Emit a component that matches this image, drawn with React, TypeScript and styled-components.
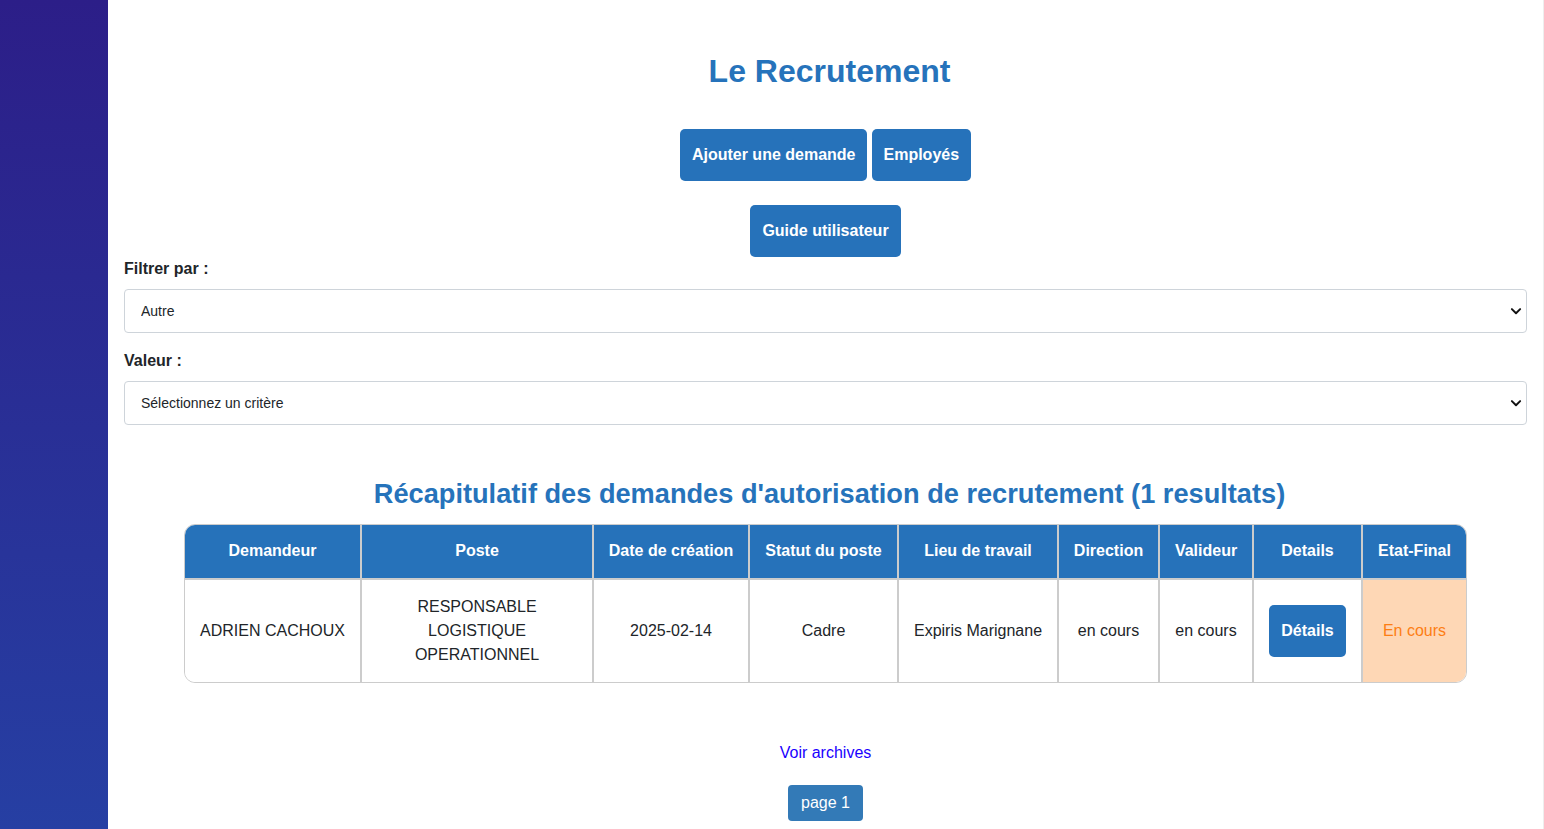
import React from "react";
import styled, { createGlobalStyle } from "styled-components";

const Global = createGlobalStyle`
  html, body { margin: 0; padding: 0; }
  body {
    font-family: "Liberation Sans", Arial, sans-serif;
    color: #212529;
    background: #fff;
  }
  * { box-sizing: border-box; }
`;

const Layout = styled.div`
  display: flex;
  min-height: 100vh;
`;

const Sidebar = styled.aside`
  width: 108px;
  flex: 0 0 108px;
  background: linear-gradient(180deg, #2c1e88 0%, #263fa3 100%);
`;

const Main = styled.main`
  flex: 1;
  padding: 16px 16px 8px;
  border-right: 1px solid #eeeeee;
  min-width: 0;
`;

const Title = styled.h1`
  margin: 37px 0 0;
  padding-left: 8px;
  text-align: center;
  font-size: 32px;
  line-height: 37px;
  font-weight: 700;
  color: #2673bb;
`;

const ButtonRow = styled.div<{ $top: number }>`
  display: flex;
  justify-content: center;
  gap: 5px;
  margin-top: ${(p) => p.$top}px;
`;

const PrimaryButton = styled.button<{ $px?: number }>`
  font-family: "Liberation Sans", Arial, sans-serif;
  font-size: 16px;
  font-weight: 700;
  line-height: 18px;
  color: #fff;
  background: #2672ba;
  border: none;
  border-radius: 5px;
  padding: 17px ${(p) => p.$px ?? 11.5}px;
  cursor: pointer;
`;

const FieldGroup = styled.div<{ $top: number }>`
  margin-top: ${(p) => p.$top}px;
`;

const Label = styled.label`
  display: block;
  font-size: 16px;
  font-weight: 700;
  line-height: 24px;
  color: #212529;
  margin-bottom: 8px;
`;

const SelectWrap = styled.div`
  position: relative;
`;

const Select = styled.select`
  appearance: none;
  -webkit-appearance: none;
  width: 100%;
  height: 44px;
  font-family: "Liberation Sans", Arial, sans-serif;
  font-size: 14px;
  color: #212529;
  background: #fff;
  border: 1px solid #ced4da;
  border-radius: 4px;
  padding: 0 16px;
`;

const Chevron = styled.svg`
  position: absolute;
  right: 5px;
  top: 50%;
  transform: translateY(-50%);
  pointer-events: none;
`;

const SectionTitle = styled.h2`
  margin: 52px 0 0;
  padding-left: 8px;
  text-align: center;
  font-size: 27.2px;
  line-height: 34px;
  font-weight: 700;
  color: #2673bb;
`;

const TableFrame = styled.div`
  width: 1283px;
  margin: 13px auto 0;
  border: 1px solid #cccccc;
  border-radius: 11px;
  overflow: hidden;
`;

const Table = styled.table`
  width: 100%;
  border-collapse: collapse;
  table-layout: fixed;
`;

const Th = styled.th<{ $w: number }>`
  width: ${(p) => p.$w}px;
  background: #2672ba;
  color: #fff;
  font-size: 16px;
  font-weight: 700;
  line-height: 24px;
  padding: 14px 4px 15px;
  text-align: center;
  border-right: 2px solid #cccccc;
  border-bottom: 2px solid #cccccc;
  &:last-child { border-right: none; }
`;

const Td = styled.td<{ $final?: boolean }>`
  font-size: 16px;
  line-height: 24px;
  padding: 15px 8px;
  text-align: center;
  vertical-align: middle;
  color: ${(p) => (p.$final ? "#fd7e14" : "#212529")};
  background: ${(p) => (p.$final ? "#fed7b5" : "#fff")};
  border-right: 2px solid #cccccc;
  &:last-child { border-right: none; }
`;

const Footer = styled.div`
  display: flex;
  flex-direction: column;
  align-items: center;
  margin-top: 61px;
`;

const ArchiveLink = styled.a`
  font-size: 16px;
  line-height: 18px;
  color: #1a00ff;
  text-decoration: none;
`;

const PageButton = styled.button`
  margin-top: 23px;
  font-family: "Liberation Sans", Arial, sans-serif;
  font-size: 16px;
  line-height: 24px;
  color: #fff;
  background: #337ab7;
  border: none;
  border-radius: 4px;
  padding: 6px 13px;
`;

const columns: { label: string; w: number }[] = [
  { label: "Demandeur", w: 176 },
  { label: "Poste", w: 232 },
  { label: "Date de création", w: 156 },
  { label: "Statut du poste", w: 149 },
  { label: "Lieu de travail", w: 160 },
  { label: "Direction", w: 101 },
  { label: "Valideur", w: 94 },
  { label: "Details", w: 109 },
  { label: "Etat-Final", w: 104 },
];

const ChevronIcon = () => (
  <Chevron width="12" height="12" viewBox="0 0 16 16">
    <path d="M2.5 5.5 8 11l5.5-5.5" fill="none" stroke="#111" strokeWidth="2.6" strokeLinecap="round" strokeLinejoin="round" />
  </Chevron>
);

export default function App() {
  return (
    <>
      <Global />
      <Layout>
        <Sidebar />
        <Main>
          <Title>Le Recrutement</Title>
          <ButtonRow $top={39}>
            <PrimaryButton>Ajouter une demande</PrimaryButton>
            <PrimaryButton>Employés</PrimaryButton>
          </ButtonRow>
          <ButtonRow $top={24}>
            <PrimaryButton $px={12.5}>Guide utilisateur</PrimaryButton>
          </ButtonRow>
          <FieldGroup $top={0}>
            <Label>Filtrer par :</Label>
            <SelectWrap>
              <Select defaultValue="autre">
                <option value="autre">Autre</option>
              </Select>
              <ChevronIcon />
            </SelectWrap>
          </FieldGroup>
          <FieldGroup $top={16}>
            <Label>Valeur :</Label>
            <SelectWrap>
              <Select defaultValue="">
                <option value="">Sélectionnez un critère</option>
              </Select>
              <ChevronIcon />
            </SelectWrap>
          </FieldGroup>
          <SectionTitle>Récapitulatif des demandes d'autorisation de recrutement (1 resultats)</SectionTitle>
          <TableFrame>
            <Table>
              <thead>
                <tr>
                  {columns.map((c) => (
                    <Th key={c.label} $w={c.w}>{c.label}</Th>
                  ))}
                </tr>
              </thead>
              <tbody>
                <tr>
                  <Td>ADRIEN CACHOUX</Td>
                  <Td>RESPONSABLE<br />LOGISTIQUE<br />OPERATIONNEL</Td>
                  <Td>2025-02-14</Td>
                  <Td>Cadre</Td>
                  <Td>Expiris Marignane</Td>
                  <Td>en cours</Td>
                  <Td>en cours</Td>
                  <Td><PrimaryButton $px={12}>Détails</PrimaryButton></Td>
                  <Td $final>En cours</Td>
                </tr>
              </tbody>
            </Table>
          </TableFrame>
          <Footer>
            <ArchiveLink href="#">Voir archives</ArchiveLink>
            <PageButton>page 1</PageButton>
          </Footer>
        </Main>
      </Layout>
    </>
  );
}
